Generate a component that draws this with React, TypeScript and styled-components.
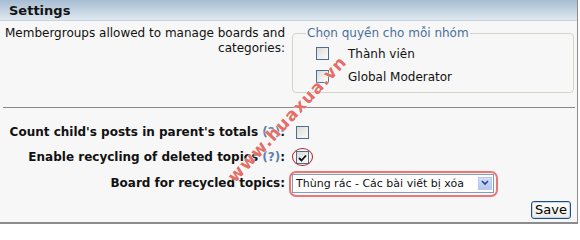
import React from 'react'
import styled, { createGlobalStyle } from 'styled-components'

const GlobalStyle = createGlobalStyle`
  html, body {
    margin: 0;
    padding: 0;
    background: #ffffff;
  }
  body {
    font-family: "DejaVu Sans", Verdana, sans-serif;
    font-size: 12px;
    color: #000;
  }
`

const Panel = styled.div`
  position: relative;
  width: 578px;
  height: 224px;
  box-sizing: border-box;
  background: #f7f7f7;
  border-right: 1px solid #8c8c8c;
  border-bottom: 2px solid #8c8c8c;
  overflow: hidden;
`

const TitleBar = styled.div`
  height: 21px;
  box-sizing: border-box;
  padding: 0 9px;
  display: flex;
  align-items: center;
  background: linear-gradient(#a6bdd2, #dfe8ef);
  border-bottom: 1px solid #c3d3df;
  font-weight: bold;
  font-size: 13px;
  color: #141414;
`

const Grid = styled.div`
  display: grid;
  grid-template-columns: 285px 1fr;
  column-gap: 7px;
`

const TopSection = styled(Grid)`
  padding-top: 5px;
  padding-right: 3px;
`

const Label = styled.div`
  text-align: right;
  line-height: 15px;
  color: #111;
  padding-left: 3px;
`

const Fieldset = styled.fieldset`
  margin: 0;
  padding: 1px 0 4px 23px;
  border: 1px solid #d4d4c8;
  border-radius: 4px;
  min-width: 0;
`

const Legend = styled.legend`
  padding: 0 1px;
  margin-left: -10px;
  line-height: 15px;
  color: #4a6f9c;
`

const GroupRow = styled.label`
  display: flex;
  align-items: center;
  height: 23px;
  gap: 19px;
  color: #111;
`

const Box = styled.span`
  position: relative;
  display: inline-flex;
  align-items: center;
  justify-content: center;
  width: 13px;
  height: 13px;
  box-sizing: border-box;
  border: 1px solid #4c6d96;
  background: linear-gradient(135deg, #dcdcd6, #fbfbf9);
  flex: none;
`

const Divider = styled.hr`
  margin: 14px 2px 0 3px;
  border: none;
  border-top: 1px solid #8a8a8a;
  height: 0;
`

const FormGrid = styled(Grid)`
  padding-top: 12px;
  grid-template-rows: 25px 25px 26px;
`

const FieldLabel = styled(Label)`
  font-weight: bold;
  align-self: center;
`

const Help = styled.span`
  color: #5b80ad;
`

const Value = styled.div`
  display: flex;
  align-items: center;
`

const CheckWrap = styled.span`
  position: relative;
  display: inline-flex;
  margin-left: 4px;
`

const RedCircle = styled.span`
  position: absolute;
  left: -4px;
  top: -3px;
  width: 21px;
  height: 18px;
  box-sizing: border-box;
  border: 1px solid #b41f1f;
  border-radius: 50%;
`

const SelectWrap = styled.span`
  position: relative;
  display: inline-flex;
`

const RedFrame = styled.span`
  position: absolute;
  left: -3px;
  top: -3px;
  right: -4px;
  bottom: -4px;
  border: 2px solid #ea7777;
  border-radius: 7px;
`

const FakeSelect = styled.span`
  display: inline-flex;
  align-items: center;
  justify-content: space-between;
  width: 202px;
  height: 19px;
  box-sizing: border-box;
  border: 1px solid #7f9db9;
  background: #fff;
  padding: 0 1px 0 3px;
  color: #111;
  font-size: 11px;
  white-space: nowrap;
`

const DropButton = styled.span`
  width: 14px;
  height: 13px;
  display: inline-flex;
  align-items: center;
  justify-content: center;
  background: linear-gradient(#d2def7, #b5c8ef);
  border: 1px solid #b7c9ee;
  box-sizing: border-box;
`

const Footer = styled.div`
  display: flex;
  justify-content: flex-end;
  padding: 5px 6px 0 0;
`

const SaveButton = styled.button`
  font-family: "DejaVu Sans", Verdana, sans-serif;
  font-size: 13px;
  height: 18px;
  padding: 0 3px;
  line-height: 14px;
  color: #000;
  border: 1px solid #1e4f8a;
  border-radius: 3px;
  background: linear-gradient(#ffffff, #ecebe3);
  box-shadow: inset 0 0 0 1px #c4d3ee;
`

const Watermark = styled.div`
  position: absolute;
  left: 287px;
  top: 119px;
  transform: translate(-50%, -50%) rotate(-47deg);
  font-family: "DejaVu Sans", Verdana, sans-serif;
  font-weight: bold;
  font-size: 17px;
  letter-spacing: 1px;
  white-space: nowrap;
  color: rgba(222, 70, 60, 0.8);
  text-shadow: 0 0 2px #fff, 0 0 1px #fff;
  pointer-events: none;
`

const Check = () => (
  <svg width="9" height="8" viewBox="0 0 9 8">
    <path d="M1 4 L3.5 6.5 L8 1.5" fill="none" stroke="#111" strokeWidth="1.8" />
  </svg>
)

const Chevron = () => (
  <svg width="8" height="6" viewBox="0 0 8 6">
    <path d="M1 1 L4 4 L7 1" fill="none" stroke="#27459a" strokeWidth="1.7" />
  </svg>
)

const groups = ['Thành viên', 'Global Moderator']

export default function App() {
  return (
    <>
      <GlobalStyle />
      <Panel>
        <TitleBar>Settings</TitleBar>
        <TopSection>
          <Label>Membergroups allowed to manage boards and categories:</Label>
          <Fieldset>
            <Legend>Chọn quyền cho mỗi nhóm</Legend>
            {groups.map((g) => (
              <GroupRow key={g}>
                <Box />
                {g}
              </GroupRow>
            ))}
          </Fieldset>
        </TopSection>
        <Divider />
        <FormGrid>
          <FieldLabel>
            Count child's posts in parent's totals <Help>(?)</Help>:
          </FieldLabel>
          <Value>
            <CheckWrap>
              <Box />
            </CheckWrap>
          </Value>
          <FieldLabel>
            Enable recycling of deleted topics <Help>(?)</Help>:
          </FieldLabel>
          <Value>
            <CheckWrap>
              <Box>
                <Check />
              </Box>
              <RedCircle />
            </CheckWrap>
          </Value>
          <FieldLabel>Board for recycled topics:</FieldLabel>
          <Value>
            <SelectWrap>
              <FakeSelect>
                Thùng rác - Các bài viết bị xóa
                <DropButton>
                  <Chevron />
                </DropButton>
              </FakeSelect>
              <RedFrame />
            </SelectWrap>
          </Value>
        </FormGrid>
        <Footer>
          <SaveButton>Save</SaveButton>
        </Footer>
        <Watermark>www.huaxua.vn</Watermark>
      </Panel>
    </>
  )
}
